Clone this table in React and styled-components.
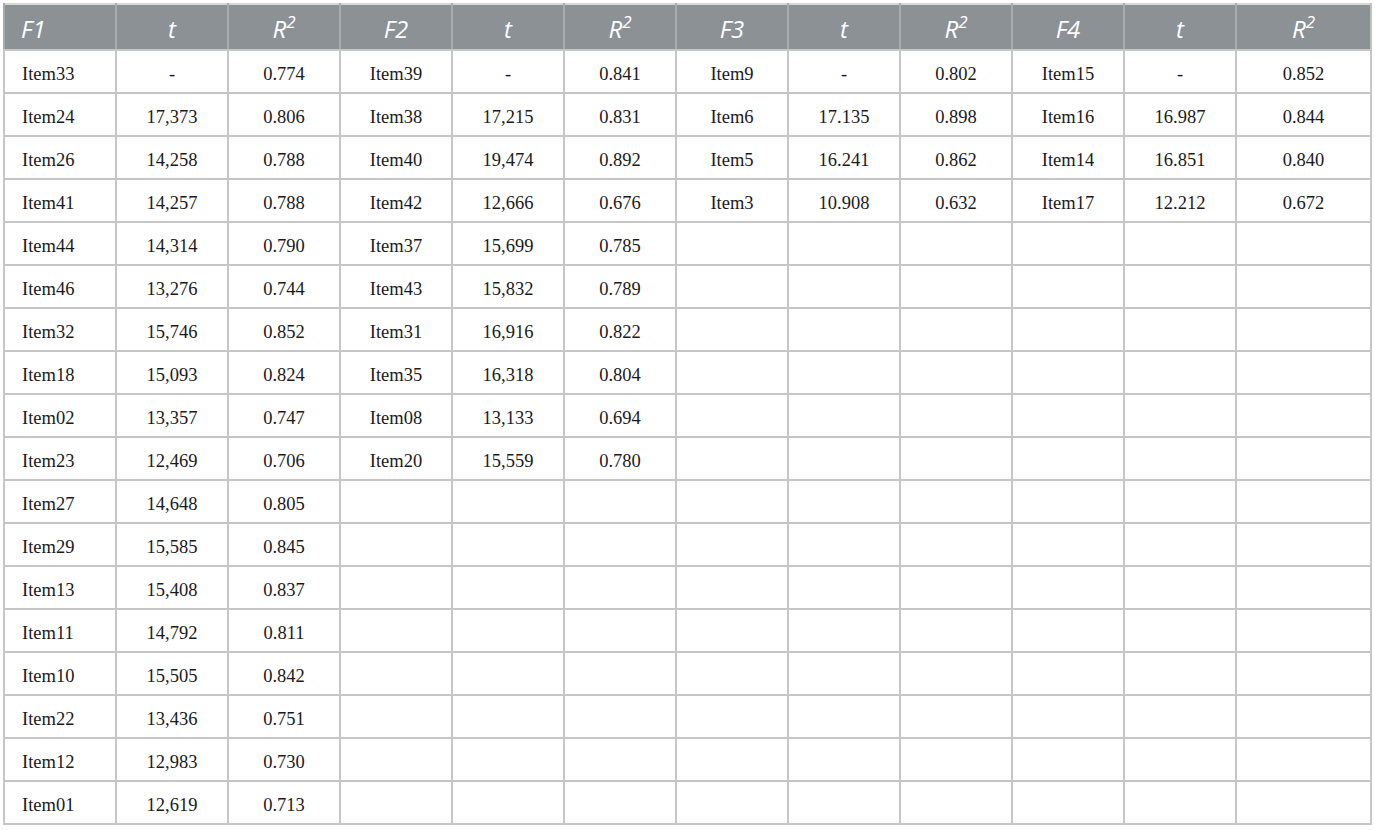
import * as React from "react";
import styled, { createGlobalStyle } from "styled-components";

const Global = createGlobalStyle`
  html, body {
    margin: 0;
    padding: 0;
    background: #ffffff;
  }
  body {
    padding: 3px 3px 0 3px;
  }
`;

const Table = styled.table`
  border-collapse: collapse;
  table-layout: fixed;
  width: 1369px;
  border: 2px solid #bcc2bd;
  border-top-color: #d4d7d6;
`;

const HeadCell = styled.th`
  height: 46px;
  padding: 3px 0 0 ${(p) => (p.$first ? "16px" : "0")};
  box-sizing: border-box;
  background: #8b9194;
  color: #ffffff;
  font-family: "Open Sans", "Noto Sans", sans-serif;
  font-style: italic;
  font-weight: 400;
  font-size: 24px;
  text-align: ${(p) => (p.$first ? "left" : "center")};
  border-left: 2px solid #a6abad;
  border-bottom: 2px solid #c6c6c6;

  sup {
    font-size: 17px;
    line-height: 0;
    vertical-align: 10px;
  }
`;

const Cell = styled.td`
  height: 43px;
  box-sizing: border-box;
  padding: 5px 0 0 ${(p) => (p.$first ? "17px" : "0")};
  border: 2px solid #c6c6c6;
  color: #1a1a1a;
  font-family: "Liberation Serif", "Times New Roman", serif;
  font-size: 18.5px;
  text-align: ${(p) => (p.$first ? "left" : "center")};
  white-space: nowrap;
`;

const groups = [
  {
    name: "F1",
    rows: [
      ["Item33", "-", "0.774"],
      ["Item24", "17,373", "0.806"],
      ["Item26", "14,258", "0.788"],
      ["Item41", "14,257", "0.788"],
      ["Item44", "14,314", "0.790"],
      ["Item46", "13,276", "0.744"],
      ["Item32", "15,746", "0.852"],
      ["Item18", "15,093", "0.824"],
      ["Item02", "13,357", "0.747"],
      ["Item23", "12,469", "0.706"],
      ["Item27", "14,648", "0.805"],
      ["Item29", "15,585", "0.845"],
      ["Item13", "15,408", "0.837"],
      ["Item11", "14,792", "0.811"],
      ["Item10", "15,505", "0.842"],
      ["Item22", "13,436", "0.751"],
      ["Item12", "12,983", "0.730"],
      ["Item01", "12,619", "0.713"],
    ],
  },
  {
    name: "F2",
    rows: [
      ["Item39", "-", "0.841"],
      ["Item38", "17,215", "0.831"],
      ["Item40", "19,474", "0.892"],
      ["Item42", "12,666", "0.676"],
      ["Item37", "15,699", "0.785"],
      ["Item43", "15,832", "0.789"],
      ["Item31", "16,916", "0.822"],
      ["Item35", "16,318", "0.804"],
      ["Item08", "13,133", "0.694"],
      ["Item20", "15,559", "0.780"],
    ],
  },
  {
    name: "F3",
    rows: [
      ["Item9", "-", "0.802"],
      ["Item6", "17.135", "0.898"],
      ["Item5", "16.241", "0.862"],
      ["Item3", "10.908", "0.632"],
    ],
  },
  {
    name: "F4",
    rows: [
      ["Item15", "-", "0.852"],
      ["Item16", "16.987", "0.844"],
      ["Item14", "16.851", "0.840"],
      ["Item17", "12.212", "0.672"],
    ],
  },
];

const ROWS = 18;

export default function App() {
  return (
    <>
      <Global />
      <Table>
        <colgroup>
          {Array.from({ length: 11 }).map((_, i) => (
            <col key={i} style={{ width: 112 }} />
          ))}
          <col />
        </colgroup>
        <thead>
          <tr>
            {groups.map((g, gi) => (
              <React.Fragment key={g.name}>
                <HeadCell $first={gi === 0}>{g.name}</HeadCell>
                <HeadCell>t</HeadCell>
                <HeadCell>
                  R<sup>2</sup>
                </HeadCell>
              </React.Fragment>
            ))}
          </tr>
        </thead>
        <tbody>
          {Array.from({ length: ROWS }).map((_, r) => (
            <tr key={r}>
              {groups.map((g, gi) => {
                const row = g.rows[r] || ["", "", ""];
                return (
                  <React.Fragment key={g.name}>
                    <Cell $first={gi === 0}>{row[0]}</Cell>
                    <Cell>{row[1]}</Cell>
                    <Cell>{row[2]}</Cell>
                  </React.Fragment>
                );
              })}
            </tr>
          ))}
        </tbody>
      </Table>
    </>
  );
}
